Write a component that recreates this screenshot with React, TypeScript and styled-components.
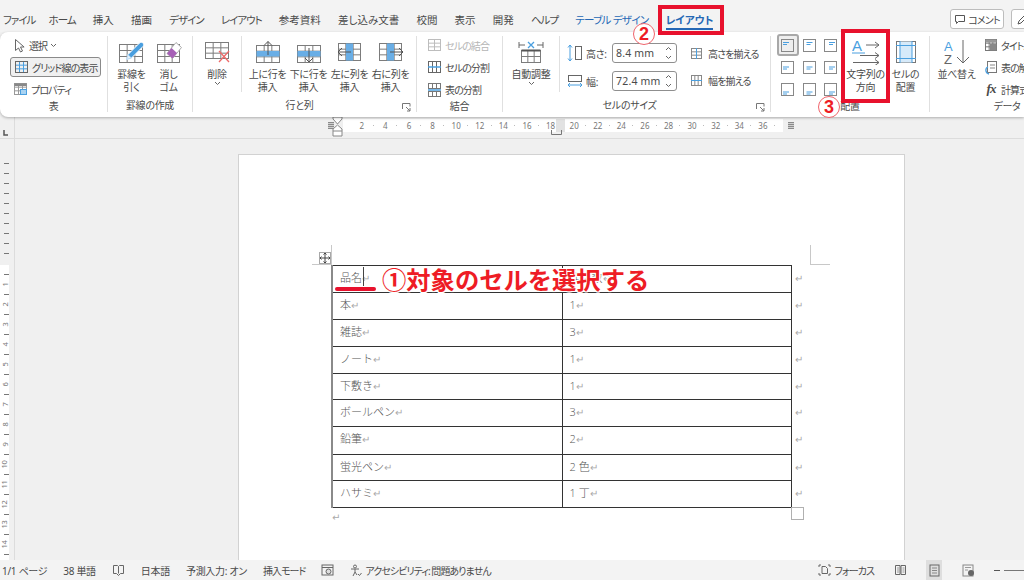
import React from "react";
import styled, { createGlobalStyle } from "styled-components";

const G = "#7c7c7c";
const B = "#4a9fdf";
const LB = "#a9d3f2";
const UI = `"Noto Sans", "Noto Sans CJK JP", sans-serif`;

const Global = createGlobalStyle`
  html, body { margin: 0; padding: 0; background: #f0f0f0; }
  * { box-sizing: border-box; }
`;

const Root = styled.div`
  position: relative;
  width: 1024px;
  height: 580px;
  overflow: hidden;
  display: flex;
  flex-direction: column;
  background: #f0f0f0;
  font-family: ${UI};
  font-feature-settings: "palt";
  font-size: 10px;
  letter-spacing: -0.3px;
  color: #4a4a4a;
`;

/* ---------- tabs ---------- */
const TabBar = styled.header`
  height: 32px;
  flex: none;
  display: flex;
  gap: 17.2px;
  padding-left: 3px;
  background: #f3f3f3;
  overflow: hidden;
`;
const Tab = styled.div<{ $tone?: "ctx" | "active"; $ls: number; $pull?: number }>`
  height: 31px;
  padding-top: 13px;
  font-size: 10.5px;
  line-height: 15px;
  white-space: nowrap;
  flex: none;
  letter-spacing: ${(p) => p.$ls}px;
  margin-right: ${(p) => -(p.$pull ?? 0)}px;
  color: ${(p) => (p.$tone ? "#2467b5" : "#4a4a4a")};
  font-weight: ${(p) => (p.$tone === "active" ? 700 : 400)};
  ${(p) => (p.$tone === "active" ? "height: 30px; border-bottom: 2px solid #2467b5;" : "")}
`;
const TabActions = styled.div`
  margin-left: auto;
  margin-right: -11px;
  display: flex;
  gap: 7px;
  padding-top: 9px;
  flex: none;
`;
const CommentButton = styled.div<{ $w: number }>`
  width: ${(p) => p.$w}px;
  height: 20px;
  display: flex;
  align-items: center;
  justify-content: center;
  gap: 2px;
  background: #fff;
  border: 1px solid #bdbdbd;
  border-radius: 3px;
  font-size: 10px;
  letter-spacing: -0.8px;
  white-space: nowrap;
`;

/* ---------- ribbon ---------- */
const Ribbon = styled.section`
  position: relative;
  z-index: 2;
  height: 85px;
  flex: none;
  display: flex;
  padding-top: 4px;
  background: #fff;
  border-radius: 8px 0 0 8px;
  box-shadow: 0 1px 3px rgba(0, 0, 0, 0.28);
  overflow: hidden;
`;
const Group = styled.div<{ $w: number; $last?: boolean }>`
  position: relative;
  width: ${(p) => p.$w}px;
  height: 76px;
  flex: none;
  display: flex;
  flex-direction: column;
  border-right: ${(p) => (p.$last ? "none" : "1px solid #e0e0e0")};
`;
const GroupBody = styled.div<{ $pad?: number }>`
  height: 65px;
  display: flex;
  padding-left: ${(p) => p.$pad ?? 0}px;
`;
const GroupLabel = styled.div<{ $right?: number }>`
  height: 13px;
  line-height: 13px;
  text-align: center;
  font-size: 10px;
  padding-right: ${(p) => p.$right ?? 0}px;
  white-space: nowrap;
`;
const Launcher = styled.svg`
  position: absolute;
  right: 5px;
  bottom: 0;
`;
const BigButton = styled.div<{ $w: number; $divider?: boolean; $lead?: number }>`
  width: ${(p) => p.$w}px;
  flex: none;
  display: flex;
  flex-direction: column;
  align-items: center;
  margin-left: ${(p) => p.$lead ?? 0}px;
  border-right: ${(p) => (p.$divider ? "1px solid #e0e0e0" : "none")};
  height: ${(p) => (p.$divider ? "56px" : "auto")};
`;
const IconSlot = styled.div`
  height: 32px;
  display: flex;
  align-items: center;
  justify-content: center;
`;
const BigLabel = styled.div`
  font-size: 10px;
  line-height: 13px;
  text-align: center;
  white-space: pre-line;
`;
const Stack = styled.div<{ $w?: number }>`
  margin-top: -2px;
  display: flex;
  flex-direction: column;
  ${(p) => (p.$w ? `width: ${p.$w}px;` : "")}
  flex: none;
`;
const SmallRow = styled.div<{ $sel?: boolean; $off?: boolean }>`
  height: ${(p) => (p.$sel ? "20px" : "22px")};
  margin: ${(p) => (p.$sel ? "1px 0" : "0")};
  display: flex;
  align-items: center;
  gap: 3px;
  padding-left: 3px;
  font-size: 10px;
  letter-spacing: -0.9px;
  white-space: nowrap;
  color: ${(p) => (p.$off ? "#b5b5b5" : "#4a4a4a")};
  background: ${(p) => (p.$sel ? "#f0f0f0" : "transparent")};
  border: ${(p) => (p.$sel ? "1px solid #8a8a8a" : "none")};
  border-radius: 3px;
`;
const SizeStack = styled.div`
  display: flex;
  flex-direction: column;
  gap: 8px;
  margin: 7px 13px 0 7px;
  flex: none;
`;
const SizeRow = styled.div`
  height: 20px;
  display: flex;
  align-items: center;
  font-size: 10px;
`;
const SizeName = styled.span`
  width: 29px;
  padding-left: 3px;
`;
const SizeInput = styled.div`
  width: 65px;
  height: 20px;
  padding-left: 3px;
  display: flex;
  align-items: center;
  justify-content: space-between;
  border: 1px solid #8f8f8f;
  border-radius: 3px;
  font-size: 10.5px;
  letter-spacing: 0.2px;
`;
const Spin = styled.svg`
  margin-right: 4px;
`;
const EqualStack = styled.div`
  display: flex;
  flex-direction: column;
  gap: 5px;
  margin-top: 6px;
  flex: none;
`;
const EqualRow = styled.div`
  height: 22px;
  display: flex;
  align-items: center;
  gap: 5px;
  letter-spacing: -0.9px;
  white-space: nowrap;
`;
const AlignGrid = styled.div`
  display: grid;
  grid-template-columns: repeat(3, 21.5px);
  grid-auto-rows: 22px;
  margin-top: -2px;
  flex: none;
`;
const AlignCell = styled.div<{ $sel?: boolean }>`
  display: flex;
  align-items: center;
  justify-content: center;
  background: ${(p) => (p.$sel ? "#eeeeee" : "transparent")};
  border: ${(p) => (p.$sel ? "2px solid #a8a8a8" : "none")};
  border-radius: 3px;
`;
const FxMark = styled.i`
  font-family: "Liberation Serif", serif;
  font-size: 13px;
  font-weight: 700;
  width: 14px;
  text-align: center;
`;

/* ---------- rulers ---------- */
const RulerRow = styled.div`
  height: 22px;
  flex: none;
  display: flex;
  border-bottom: 1px solid #dcdcdc;
`;
const RulerCorner = styled.div`
  width: 15px;
  flex: none;
  padding: 8px 0 0 1px;
  border-right: 1px solid #dcdcdc;
`;
const RulerTrack = styled.div`
  position: relative;
  margin: 2px 0 0 328px;
  width: 440px;
  height: 13px;
  padding-left: 7px;
  display: flex;
  background: #fff;
  font-size: 8px;
  line-height: 13px;
  letter-spacing: 0;
  color: #777;
`;
const RulerNum = styled.span`
  position: relative;
  width: 23.6px;
  flex: none;
  text-align: center;
  &::after {
    content: "";
    position: absolute;
    right: 0;
    top: 6px;
    width: 1px;
    height: 1px;
    background: #bbb;
  }
`;
const RulerGutter = styled.div`
  position: absolute;
  left: 213px;
  top: 0;
  width: 9px;
  height: 13px;
  background: #e2e2e2;
`;
const RulerEnd = styled.span<{ $x: number }>`
  position: absolute;
  left: ${(p) => p.$x}px;
  top: 3px;
  width: 6px;
  height: 7px;
  background: repeating-linear-gradient(#8a8a8a 0 1px, #cfcfcf 1px 2px);
`;
const Hourglass = styled.svg`
  position: absolute;
  left: -11px;
  top: -3px;
`;
const TabStop = styled.svg`
  position: absolute;
  left: 208px;
  top: 11px;
`;
const Work = styled.div`
  flex: 1;
  min-height: 0;
  display: flex;
`;
const VRuler = styled.div`
  width: 15px;
  flex: none;
  border-right: 1px solid #dcdcdc;
  overflow: hidden;
`;
const VGray = styled.div`
  height: 126px;
  width: 9px;
  padding-top: 19px;
`;
const VWhite = styled.div`
  width: 9px;
  padding-top: 4px;
  height: 300px;
  background: #fff;
`;
const VTick = styled.div`
  height: 10px;
  display: flex;
  align-items: center;
  justify-content: flex-end;
  &::after {
    content: "";
    width: 5px;
    height: 1px;
    background: #777;
  }
`;
const VNum = styled.div`
  height: 10px;
  width: 9px;
  font-size: 7.5px;
  line-height: 9px;
  color: #777;
  display: flex;
  align-items: center;
  justify-content: center;
  white-space: nowrap;
  span { transform: rotate(-90deg); display: block; }
`;
const Canvas = styled.main`
  flex: 1;
  min-width: 0;
  overflow: hidden;
  padding: 15px 0 0 223px;
`;
const Page = styled.article`
  position: relative;
  width: 667px;
  height: 420px;
  background: #fff;
  border: 1px solid #d2d2d2;
  border-bottom: none;
  padding: 110px 0 0 92px;
`;
const CropMark = styled.span<{ $side: "l" | "r" }>`
  position: absolute;
  top: 90px;
  width: 20px;
  height: 20px;
  border-bottom: 1px solid #c8c8c8;
  ${(p) =>
    p.$side === "l"
      ? "left: 73px; border-right: 1px solid #c8c8c8;"
      : "left: 571px; border-left: 1px solid #c8c8c8;"}
`;
const MoveHandle = styled.span`
  position: absolute;
  left: 80px;
  top: 97px;
  width: 12px;
  height: 12px;
  background: #fff;
  border: 1px solid #a8a8a8;
  display: flex;
  align-items: center;
  justify-content: center;
`;
const SizeHandle = styled.span`
  position: absolute;
  left: 552px;
  top: 352px;
  width: 13px;
  height: 13px;
  background: #fff;
  border: 1px solid #b0b0b0;
`;
const DocTable = styled.table`
  border-collapse: collapse;
  table-layout: fixed;
  width: 471px;
  font-family: "Open Sans", "Noto Sans CJK JP", sans-serif;
  font-size: 11px;
  font-weight: 300;
  font-feature-settings: normal;
  letter-spacing: 0;
  color: #555;
`;
const DocRow = styled.tr<{ $h: number }>`
  height: ${(p) => p.$h}px;
`;
const DocCell = styled.td<{ $w: number }>`
  position: relative;
  width: ${(p) => p.$w}px;
  border: 1px solid #333;
  padding: 3px 0 0 7px;
  vertical-align: top;
  line-height: 17px;
  white-space: nowrap;
  &:first-child { border-left: 2px solid #8a8a8a; }
`;
const RowEnd = styled.td`
  width: 12px;
  padding: 3px 0 0 3px;
  vertical-align: top;
  line-height: 17px;
  border: none;
`;
const Para = styled.span`
  font-family: "DejaVu Sans", sans-serif;
  font-size: 10px;
  line-height: 10px;
  color: #aaa;
`;
const Caret = styled.span`
  position: absolute;
  left: 30px;
  top: 1px;
  width: 1px;
  height: 19px;
  background: #444;
`;
const TrailingPara = styled.div`
  padding: 2px 0 0 1px;
  line-height: 14px;
`;

/* ---------- status bar ---------- */
const StatusBar = styled.footer`
  position: relative;
  z-index: 2;
  height: 20px;
  flex: none;
  display: flex;
  align-items: center;
  padding-left: 2px;
  background: #f3f3f3;
  font-size: 10px;
  color: #4a4a4a;
  white-space: nowrap;
  overflow: hidden;
`;
const StatusItem = styled.span<{ $gap?: number; $tight?: boolean }>`
  display: flex;
  align-items: center;
  gap: 3px;
  flex: none;
  margin-right: ${(p) => p.$gap ?? 16}px;
  letter-spacing: ${(p) => (p.$tight ? "-0.95px" : "-0.3px")};
`;
const ViewSlot = styled.span<{ $on?: boolean }>`
  width: 16px;
  height: 20px;
  flex: none;
  margin-right: 18px;
  display: flex;
  align-items: center;
  justify-content: center;
  background: ${(p) => (p.$on ? "#dedede" : "transparent")};
`;
const StatusRight = styled.div`
  margin-left: auto;
  display: flex;
  align-items: center;
  flex: none;
  margin-right: -40px;
`;
const ZoomMinus = styled.span`
  width: 6px;
  height: 1px;
  background: #555;
  margin-right: 4px;
`;
const ZoomLine = styled.span`
  width: 60px;
  height: 1px;
  background: #777;
`;

/* ---------- overlays ---------- */
const Callout = styled.div`
  position: absolute;
  left: 382px;
  top: 264px;
  z-index: 5;
  font-size: 24.3px;
  line-height: 32px;
  font-weight: 700;
  color: #ee1c25;
  white-space: nowrap;
  font-feature-settings: normal;
  letter-spacing: 0;
  text-shadow: 1px 0 #fff, -1px 0 #fff, 0 1px #fff, 0 -1px #fff, 1px 1px #fff, -1px -1px #fff, 1px -1px #fff, -1px 1px #fff;
`;
const CalloutLine = styled.span`
  position: absolute;
  left: 335px;
  top: 287px;
  z-index: 5;
  width: 41px;
  height: 3.5px;
  border-radius: 2px;
  background: #e8112d;
`;
const RedBox = styled.span<{ $x: number; $y: number; $w: number; $h: number }>`
  position: absolute;
  z-index: 6;
  left: ${(p) => p.$x}px;
  top: ${(p) => p.$y}px;
  width: ${(p) => p.$w}px;
  height: ${(p) => p.$h}px;
  border: 4px solid #e8112d;
`;
const Step = styled.span<{ $x: number; $y: number }>`
  position: absolute;
  z-index: 7;
  left: ${(p) => p.$x}px;
  top: ${(p) => p.$y}px;
  width: 22px;
  height: 22px;
  border-radius: 50%;
  background: #fff;
  border: 1px solid #f0646c;
  color: #ee1c25;
  font-family: "Liberation Sans", sans-serif;
  font-weight: 700;
  font-size: 18px;
  line-height: 20px;
  letter-spacing: 0;
  text-align: center;
`;

/* ---------- icons ---------- */
const TableGlyph = ({ x, y, w, h, c, r, s = G }: { x: number; y: number; w: number; h: number; c: number; r: number; s?: string }) => {
  const lines = [];
  for (let i = 1; i < c; i++) {
    const lx = x + (w * i) / c;
    lines.push(<line key={"c" + i} x1={lx} x2={lx} y1={y} y2={y + h} stroke={s} />);
  }
  for (let i = 1; i < r; i++) {
    const ly = y + (h * i) / r;
    lines.push(<line key={"r" + i} x1={x} x2={x + w} y1={ly} y2={ly} stroke={s} />);
  }
  return (
    <g>
      <rect x={x} y={y} width={w} height={h} fill="none" stroke={s} />
      {lines}
    </g>
  );
};

const Svg = ({ w, h, children }: { w: number; h: number; children: React.ReactNode }) => (
  <svg width={w} height={h} viewBox={`0 0 ${w} ${h}`} fill="none">
    {children}
  </svg>
);

const IconCursor = () => (
  <Svg w={13} h={15}>
    <path d="M2.5 1.5v11l3-2.5 2 4 2-1-2-4h3.6z" stroke="#666" fill="#fff" />
  </Svg>
);
const IconGridBlue = () => (
  <Svg w={15} h={14}>
    <TableGlyph x={1.5} y={1.5} w={12} h={11} c={3} r={3} s={B} />
    <rect x={1.5} y={1.5} width={12} height={11} stroke="#666" />
  </Svg>
);
const IconProps = () => (
  <Svg w={15} h={14}>
    <TableGlyph x={1.5} y={1.5} w={12} h={11} c={3} r={3} s="#999" />
    <rect x={1.5} y={1.5} width={12} height={2.5} fill="#888" />
    <rect x={7.5} y={7.5} width={6} height={5} fill={LB} stroke={B} />
  </Svg>
);
const IconPencil = () => (
  <Svg w={28} h={24}>
    <TableGlyph x={1.5} y={4.5} w={23} h={18} c={3} r={3} />
    <path d="M8.500 19.500l1.500-5L21.500 3c1-1 2.600-1 3.500 0s1 2.400 0 3.500L13.500 18z" fill={B} stroke="#fff" />
    <path d="M8.500 19.500l1.500-5 3.500 3.500z" fill="#e6f2fb" stroke="#8abde8" strokeWidth={0.5} />
  </Svg>
);
const IconEraser = () => (
  <Svg w={26} h={24}>
    <TableGlyph x={1.5} y={4.5} w={22} h={18} c={3} r={3} />
    <path d="M11 13.500L20 2.500l5.500 5-9 11z" fill="#fff" stroke="#aaa" />
    <path d="M11 13.500l4.500-5.500 5.500 5-4.500 5.500z" fill="#a65fb6" />
  </Svg>
);
const IconDelete = () => (
  <Svg w={28} h={24}>
    <TableGlyph x={2.5} y={2.5} w={23} h={16} c={3} r={3} />
    <path d="M16 11l10 11M26 11L16 22" stroke="#ee6a6a" strokeWidth={1.3} />
  </Svg>
);
const IconInsRow = ({ down }: { down?: boolean }) => (
  <Svg w={26} h={24}>
    <TableGlyph x={1.5} y={5.5} w={23} h={17} c={3} r={3} />
    <rect x={1.5} y={11} width={23} height={5.5} fill="#69aee6" />
    {down ? (
      <path d="M13 8v14M9 18l4 4 4-4" stroke="#555" fill="none" />
    ) : (
      <path d="M13 15V1.500M9 5.500l4-4 4 4" stroke="#555" fill="none" />
    )}
  </Svg>
);
const IconInsCol = ({ right }: { right?: boolean }) => (
  <Svg w={26} h={22}>
    <TableGlyph x={1.5} y={2.5} w={22} h={17} c={3} r={3} />
    <rect x={9} y={2.5} width={7} height={17} fill="#69aee6" />
    {right ? (
      <path d="M12 11h13M21 7l4 4-4 4" stroke="#555" fill="none" />
    ) : (
      <path d="M14 11H1M5 7l-4 4 4 4" stroke="#555" fill="none" />
    )}
  </Svg>
);
const IconMerge = () => (
  <Svg w={15} h={14}>
    <TableGlyph x={1.5} y={1.500} w={12} h={11} c={2} r={3} s="#bdbdbd" />
  </Svg>
);
const IconSplit = () => (
  <Svg w={15} h={14}>
    <TableGlyph x={1.5} y={1.500} w={12} h={11} c={3} r={1} s="#666" />
    <path d="M1 7h13" stroke={B} strokeWidth={1.5} />
  </Svg>
);
const IconTableSplit = () => (
  <Svg w={15} h={15}>
    <TableGlyph x={1.5} y={1.500} w={12} h={5} c={3} r={1} s="#777" />
    <TableGlyph x={1.5} y={9.500} w={12} h={5} c={3} r={1} s="#777" />
    <path d="M1 8h13" stroke={B} strokeWidth={1.5} />
  </Svg>
);
const IconAutoFit = () => (
  <Svg w={26} h={22}>
    <TableGlyph x={3.5} y={9.5} w={19} h={12} c={3} r={2} />
    <path d="M3.5 9.500h19" stroke="#555" strokeWidth={2} />
    <path d="M1 1v6M25 1v6M1 4h6M25 4h-6" stroke="#666" />
    <path d="M10 1l6 6M16 1l-6 6" stroke={B} strokeWidth={1.3} />
  </Svg>
);
const IconHeight = () => (
  <Svg w={16} h={18}>
    <path d="M3 1v16M1 3.500L3 1l2 2.500M1 14.500L3 17l2-2.500" stroke={B} />
    <rect x={8.5} y={2.500} width={6} height={13} stroke="#666" />
  </Svg>
);
const IconWidth = () => (
  <Svg w={16} h={14}>
    <rect x={1.5} y={1.500} width={13} height={6} stroke="#666" />
    <path d="M1 11h14M3 9l-2 2 2 2M13 9l2 2-2 2" stroke={B} />
  </Svg>
);
const IconEqHeight = () => (
  <Svg w={13} h={13}>
    <TableGlyph x={1.5} y={1.500} w={10} h={10} c={2} r={3} s="#888" />
    <path d="M6.500 1v11" stroke={B} />
  </Svg>
);
const IconEqWidth = () => (
  <Svg w={13} h={13}>
    <TableGlyph x={1.5} y={1.500} w={10} h={10} c={3} r={2} s="#888" />
    <path d="M1 6.500h11" stroke={B} />
  </Svg>
);
const IconAlign = ({ col, row }: { col: number; row: number }) => {
  const lx = [3, 4.5, 6][col];
  const ly = [3.5, 6, 9][row];
  return (
    <Svg w={15} h={13}>
      <rect x={1.5} y={0.5} width={12} height={12} stroke="#888" />
      <path d={`M${lx} ${ly}h6`} stroke={B} />
      <path d={`M${lx} ${ly + 2}h4`} stroke={B} />
    </Svg>
  );
};
const IconTextDir = () => (
  <Svg w={28} h={26}>
    <text x={0} y={12} fontFamily="Liberation Sans" fontSize={15} fill={B}>A</text>
    <path d="M0 14h13" stroke={B} />
    <path d="M14 6h13M23 3l4 3-4 3M8 16.500h19M23 13.500l4 3-4 3M1 23.500h26M23 20.500l4 3-4 3" stroke="#666" />
  </Svg>
);
const IconCellAlign = () => (
  <Svg w={22} h={24}>
    <rect x={1.5} y={1.500} width={19} height={21} stroke="#777" />
    <rect x={5} y={1.500} width={12} height={21} fill="#d6eafa" />
    <path d="M5 1v22M17 1v22M1 5.500h20M1 18.500h20" stroke={B} />
  </Svg>
);
const IconSort = () => (
  <Svg w={28} h={26}>
    <text x={1} y={12} fontFamily="Liberation Sans" fontSize={13} fill={B}>A</text>
    <text x={1} y={25} fontFamily="Liberation Sans" fontSize={13} fill="#666">Z</text>
    <path d="M20 1v23M14 18l6 6 6-6" stroke="#666" />
  </Svg>
);
const IconRepeat = () => (
  <Svg w={14} h={14}>
    <TableGlyph x={1.5} y={1.500} w={11} h={11} c={3} r={3} s="#777" />
    <rect x={1.5} y={1.500} width={11} height={3} fill="#999" />
    <rect x={6} y={6} width={6.500} height={6.500} fill="#888" />
  </Svg>
);
const IconConvert = () => (
  <Svg w={14} h={15}>
    <rect x={3.500} y={1.500} width={9} height={11} stroke="#777" />
    <path d="M6 5h5M6 8h5" stroke="#888" />
    <path d="M5 14C1 13 1 8 4 7" stroke={B} strokeWidth={1.3} />
  </Svg>
);
const IconComment = () => (
  <Svg w={12} h={11}>
    <path d="M1.500 1.500h9v6h-6l-2 2v-2h-1z" stroke="#555" />
  </Svg>
);
const IconDraw = () => (
  <Svg w={14} h={13}>
    <path d="M2 11l1-3 6-6 2 2-6 6z" stroke="#555" />
  </Svg>
);
const IconBook = () => (
  <Svg w={13} h={12}>
    <path d="M1.500 1.500h4l1 1 1-1h4v8h-3l-2 2-2-2h-3zM6.500 2.500v7" stroke="#666" />
  </Svg>
);
const IconMacro = () => (
  <Svg w={13} h={12}>
    <rect x={1} y={1} width={11} height={10} stroke="#666" />
    <path d="M1 3.500h11" stroke="#666" />
    <circle cx={7.500} cy={7.500} r={2.500} stroke="#666" fill="#ddd" />
  </Svg>
);
const IconAccess = () => (
  <Svg w={12} h={13}>
    <circle cx={5} cy={2.500} r={1.500} stroke="#666" />
    <path d="M1 5h8M5 5v3l-2 4M5 8l2 3" stroke="#666" />
    <path d="M8 10l1.500 1.500L11.500 9" stroke="#666" />
  </Svg>
);
const IconFocus = () => (
  <Svg w={13} h={12}>
    <path d="M1 3V1h2M10 1h2v2M1 9v2h2M10 11h2V9" stroke="#666" />
    <path d="M4 2.500h3.500l2 2v5H4z" stroke="#666" />
  </Svg>
);
const IconRead = () => (
  <Svg w={13} h={12}>
    <path d="M1.500 1.500h4.500v9h-4.500zM7 1.500h4.500v9H7z" stroke="#666" />
    <path d="M3 4h2M3 6h2M3 8h2M8.500 4h2M8.500 6h2M8.500 8h2" stroke="#999" />
  </Svg>
);
const IconPrint = () => (
  <Svg w={11} h={13}>
    <rect x={1} y={1} width={9} height={11} stroke="#666" />
    <path d="M3 4h5M3 6.500h5M3 9h5" stroke="#888" />
  </Svg>
);
const IconWeb = () => (
  <Svg w={13} h={13}>
    <rect x={1} y={1} width={10} height={11} stroke="#888" />
    <path d="M3 3.500h6M3 6h3" stroke="#999" />
    <circle cx={9} cy={9} r={3} fill="#666" />
  </Svg>
);
const Chevron = () => (
  <svg width="7" height="5" viewBox="0 0 7 5" fill="none">
    <path d="M1 1l2.500 2.500L6 1" stroke="#666" />
  </svg>
);
const LauncherIcon = () => (
  <Launcher width="9" height="9" viewBox="0 0 9 9" fill="none">
    <path d="M.5 6V.5H8v3M4 4l4 4M8 5v3H5" stroke="#777" />
  </Launcher>
);
const SpinIcon = () => (
  <Spin width="7" height="14" viewBox="0 0 7 14" fill="none">
    <path d="M1 4l2.500-2.500L6 4M1 10l2.500 2.500L6 10" stroke="#666" />
  </Spin>
);

/* ---------- data ---------- */
const tabs: [string, number, number][] = [
  ["ファイル", -1, 4],
  ["ホーム", -1, 0],
  ["挿入", 0, 0],
  ["描画", 0, 0],
  ["デザイン", -1, 0],
  ["レイアウト", -1, 0],
  ["参考資料", 0, 0],
  ["差し込み文書", 0, 0],
  ["校閲", 0, 0],
  ["表示", 0, 0],
  ["開発", 0, 0],
  ["ヘルプ", -1, 0],
];
const rulerNums = Array.from({ length: 18 }, (_, i) => (i + 1) * 2);
const vNums = Array.from({ length: 14 }, (_, i) => i + 1);
const rows: [string, string, number][] = [
  ["本", "1", 27],
  ["雑誌", "3", 27],
  ["ノート", "1", 27],
  ["下敷き", "1", 26],
  ["ボールペン", "3", 27],
  ["鉛筆", "2", 28],
  ["蛍光ペン", "2 色", 26],
  ["ハサミ", "1 丁", 27],
];
const P = () => <Para>↵</Para>;

export default function App() {
  return (
    <Root>
      <Global />
      <TabBar>
        {tabs.map(([t, ls, pull]) => (
          <Tab key={t} $ls={ls} $pull={pull}>{t}</Tab>
        ))}
        <Tab $tone="ctx" $ls={-0.7}>テーブル デザイン</Tab>
        <Tab $tone="active" $ls={0}>レイアウト</Tab>
        <TabActions>
          <CommentButton $w={54}>
            <IconComment />
            コメント
          </CommentButton>
          <CommentButton $w={24}>
            <IconDraw />
          </CommentButton>
        </TabActions>
      </TabBar>

      <Ribbon>
        <Group $w={108}>
          <GroupBody $pad={10}>
            <Stack $w={91}>
              <SmallRow>
                <IconCursor />
                選択 <Chevron />
              </SmallRow>
              <SmallRow $sel>
                <IconGridBlue />
                グリッド線の表示
              </SmallRow>
              <SmallRow>
                <IconProps />
                プロパティ
              </SmallRow>
            </Stack>
          </GroupBody>
          <GroupLabel>表</GroupLabel>
        </Group>

        <Group $w={85}>
          <GroupBody $pad={5}>
            <BigButton $w={37}>
              <IconSlot><IconPencil /></IconSlot>
              <BigLabel>{"罫線を\n引く"}</BigLabel>
            </BigButton>
            <BigButton $w={37}>
              <IconSlot><IconEraser /></IconSlot>
              <BigLabel>{"消し\nゴム"}</BigLabel>
            </BigButton>
          </GroupBody>
          <GroupLabel>罫線の作成</GroupLabel>
        </Group>

        <Group $w={224}>
          <GroupBody>
            <BigButton $w={49} $divider>
              <IconSlot><IconDelete /></IconSlot>
              <BigLabel>削除</BigLabel>
              <Chevron />
            </BigButton>
            <BigButton $w={41} $lead={5}>
              <IconSlot><IconInsRow /></IconSlot>
              <BigLabel>{"上に行を\n挿入"}</BigLabel>
            </BigButton>
            <BigButton $w={41}>
              <IconSlot><IconInsRow down /></IconSlot>
              <BigLabel>{"下に行を\n挿入"}</BigLabel>
            </BigButton>
            <BigButton $w={41}>
              <IconSlot><IconInsCol /></IconSlot>
              <BigLabel>{"左に列を\n挿入"}</BigLabel>
            </BigButton>
            <BigButton $w={41}>
              <IconSlot><IconInsCol right /></IconSlot>
              <BigLabel>{"右に列を\n挿入"}</BigLabel>
            </BigButton>
          </GroupBody>
          <GroupLabel $right={10}>行と列</GroupLabel>
          <LauncherIcon />
        </Group>

        <Group $w={86}>
          <GroupBody $pad={7}>
            <Stack>
              <SmallRow $off><IconMerge />セルの結合</SmallRow>
              <SmallRow><IconSplit />セルの分割</SmallRow>
              <SmallRow><IconTableSplit />表の分割</SmallRow>
            </Stack>
          </GroupBody>
          <GroupLabel>結合</GroupLabel>
        </Group>

        <Group $w={268}>
          <GroupBody>
            <BigButton $w={57} $divider>
              <IconSlot><IconAutoFit /></IconSlot>
              <BigLabel>自動調整</BigLabel>
              <Chevron />
            </BigButton>
            <SizeStack>
              <SizeRow>
                <IconHeight />
                <SizeName>高さ:</SizeName>
                <SizeInput>8.4 mm<SpinIcon /></SizeInput>
              </SizeRow>
              <SizeRow>
                <IconWidth />
                <SizeName>幅:</SizeName>
                <SizeInput>72.4 mm<SpinIcon /></SizeInput>
              </SizeRow>
            </SizeStack>
            <EqualStack>
              <EqualRow><IconEqHeight />高さを揃える</EqualRow>
              <EqualRow><IconEqWidth />幅を揃える</EqualRow>
            </EqualStack>
          </GroupBody>
          <GroupLabel $right={14}>セルのサイズ</GroupLabel>
          <LauncherIcon />
        </Group>

        <Group $w={159}>
          <GroupBody $pad={6}>
            <AlignGrid>
              {[0, 1, 2].flatMap((row) =>
                [0, 1, 2].map((col) => (
                  <AlignCell key={`${row}-${col}`} $sel={row === 0 && col === 0}>
                    <IconAlign col={col} row={row} />
                  </AlignCell>
                ))
              )}
            </AlignGrid>
            <BigButton $w={48}>
              <IconSlot><IconTextDir /></IconSlot>
              <BigLabel>{"文字列の\n方向"}</BigLabel>
            </BigButton>
            <BigButton $w={32}>
              <IconSlot><IconCellAlign /></IconSlot>
              <BigLabel>{"セルの\n配置"}</BigLabel>
            </BigButton>
          </GroupBody>
          <GroupLabel>配置</GroupLabel>
        </Group>

        <Group $w={154} $last>
          <GroupBody $pad={2}>
            <BigButton $w={49}>
              <IconSlot><IconSort /></IconSlot>
              <BigLabel>並べ替え</BigLabel>
            </BigButton>
            <Stack>
              <SmallRow><IconRepeat />タイトル行の繰り返し</SmallRow>
              <SmallRow><IconConvert />表の解除</SmallRow>
              <SmallRow><FxMark>fx</FxMark>計算式</SmallRow>
            </Stack>
          </GroupBody>
          <GroupLabel>データ</GroupLabel>
        </Group>
      </Ribbon>

      <RulerRow>
        <RulerCorner>
          <svg width="7" height="6" viewBox="0 0 7 6" fill="none">
            <path d="M3 0v5h4" stroke="#555" strokeWidth="1.5" />
          </svg>
        </RulerCorner>
        <RulerTrack>
          <RulerEnd $x={-15} />
          <Hourglass width="11" height="22" viewBox="0 0 11 22" fill="none">
            <path d="M1 1h9v2L5.500 8 1 3zM5.500 9L10 13v7H1v-7zM1 15h9" stroke="#888" fill="#fff" />
          </Hourglass>
          {rulerNums.map((n) => (
            <RulerNum key={n}>{n}</RulerNum>
          ))}
          <RulerGutter />
          <RulerEnd $x={445} />
          <TabStop width="11" height="5" viewBox="0 0 11 5" fill="none">
            <path d="M.5 0v4.500h10V0" stroke="#777" />
          </TabStop>
        </RulerTrack>
      </RulerRow>

      <Work>
        <VRuler>
          <VGray>
            {Array.from({ length: 10 }, (_, i) => (
              <VTick key={i} />
            ))}
          </VGray>
          <VWhite>
            {vNums.map((n) => (
              <React.Fragment key={n}>
                <VTick />
                <VNum><span>{n}</span></VNum>
              </React.Fragment>
            ))}
            <VTick />
          </VWhite>
        </VRuler>
        <Canvas>
          <Page>
            <CropMark $side="l" />
            <CropMark $side="r" />
            <MoveHandle>
              <svg width="10" height="10" viewBox="0 0 10 10" fill="none">
                <path d="M5 0v10M0 5h10M3.500 1.500L5 0l1.500 1.500M3.500 8.500L5 10l1.500-1.500M1.500 3.500L0 5l1.500 1.500M8.500 3.500L10 5 8.500 6.500" stroke="#444" />
              </svg>
            </MoveHandle>
            <SizeHandle />
            <DocTable>
              <tbody>
                <DocRow $h={27}>
                  <DocCell $w={230}>品名<Caret /><P /></DocCell>
                  <DocCell $w={229}>発注数<P /></DocCell>
                  <RowEnd><P /></RowEnd>
                </DocRow>
                {rows.map(([a, b, h]) => (
                  <DocRow key={a} $h={h}>
                    <DocCell $w={230}>{a}<P /></DocCell>
                    <DocCell $w={229}>{b}<P /></DocCell>
                    <RowEnd><P /></RowEnd>
                  </DocRow>
                ))}
              </tbody>
            </DocTable>
            <TrailingPara><P /></TrailingPara>
          </Page>
        </Canvas>
      </Work>

      <StatusBar>
        <StatusItem>1/1 ページ</StatusItem>
        <StatusItem>38 単語</StatusItem>
        <StatusItem><IconBook /></StatusItem>
        <StatusItem>日本語</StatusItem>
        <StatusItem>予測入力: オン</StatusItem>
        <StatusItem $tight>挿入モード</StatusItem>
        <StatusItem><IconMacro /></StatusItem>
        <StatusItem $tight><IconAccess />アクセシビリティ: 問題ありません</StatusItem>
        <StatusRight>
          <StatusItem $gap={18} $tight><IconFocus />フォーカス</StatusItem>
          <ViewSlot><IconRead /></ViewSlot>
          <ViewSlot $on><IconPrint /></ViewSlot>
          <ViewSlot><IconWeb /></ViewSlot>
          <ZoomMinus />
          <ZoomLine />
        </StatusRight>
      </StatusBar>

      <Callout>①対象のセルを選択する</Callout>
      <CalloutLine />
      <RedBox $x={658} $y={5} $w={66} $h={30} />
      <RedBox $x={841} $y={29} $w={49} $h={74} />
      <Step $x={633} $y={23}>2</Step>
      <Step $x={818} $y={96}>3</Step>
    </Root>
  );
}
